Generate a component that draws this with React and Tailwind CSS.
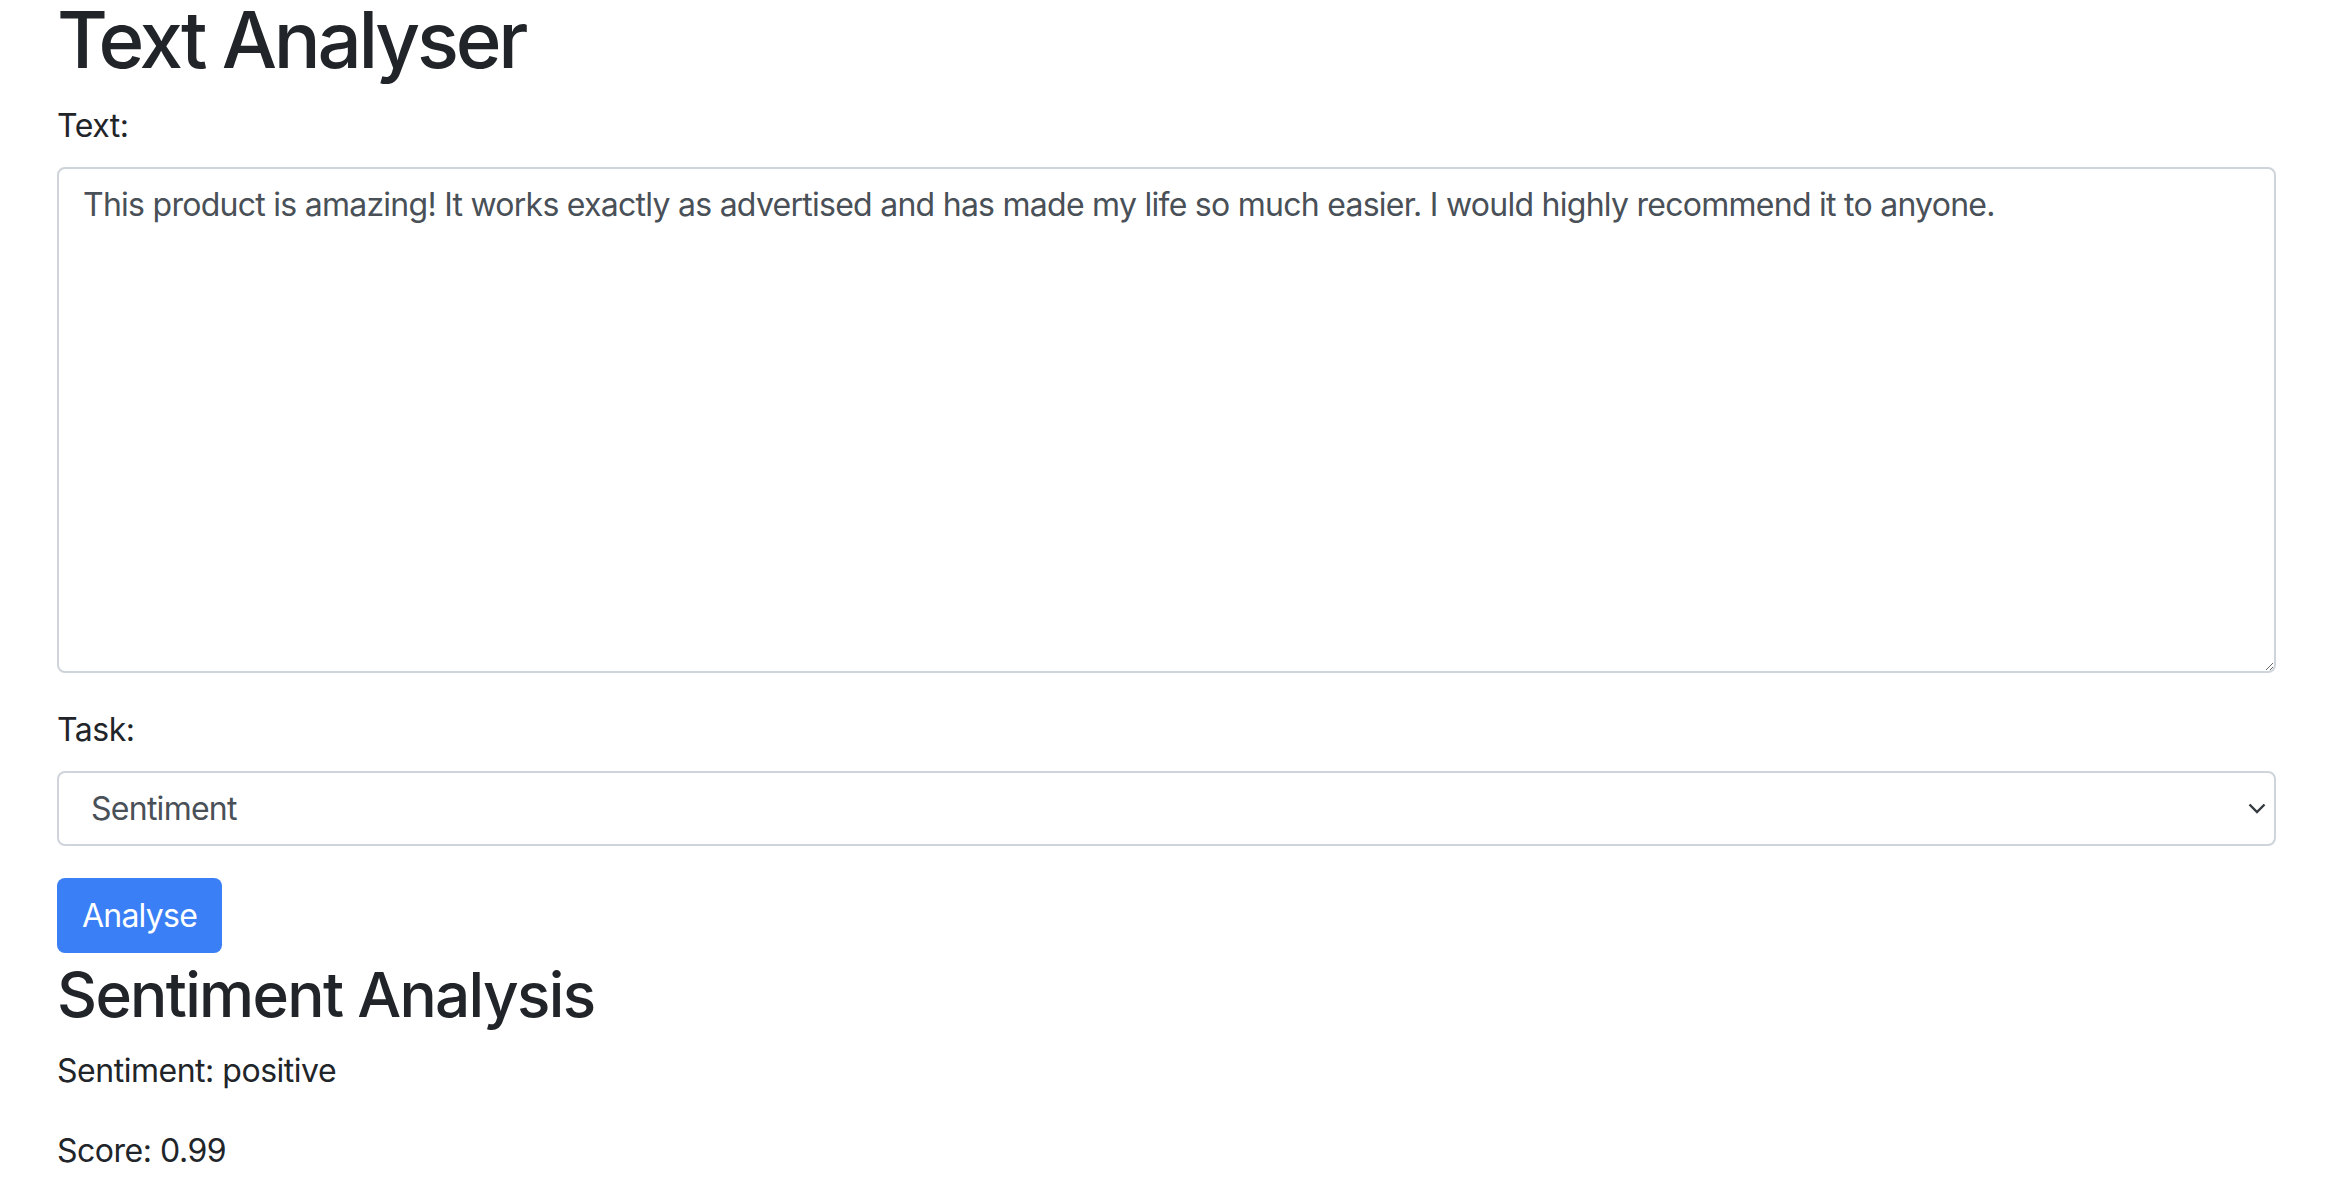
import { useState } from 'react';

const tasks = ['Sentiment', 'Summary', 'Keywords'];

export default function App() {
  const [text, setText] = useState(
    'This product is amazing! It works exactly as advertised and has made my life so much easier. I would highly recommend it to anyone.'
  );
  const [task, setTask] = useState('Sentiment');

  return (
    <div className="min-h-screen bg-white pl-[57px] pr-[64px] text-[#212529] tracking-[-0.03em] font-['Inter','Liberation_Sans',sans-serif]">
      <h1 className="text-[78px] leading-[80px] font-medium tracking-[-0.042em] mb-[22px]">Text Analyser</h1>

      <form onSubmit={e => e.preventDefault()}>
        <div className="mb-[33px]">
          <label className="block text-[32px] leading-[48px] mb-[17px]">Text:</label>
          <textarea
            value={text}
            onChange={e => setText(e.target.value)}
            className="block w-full h-[506px] border-2 border-[#ced4da] rounded-[8px] px-[24px] py-[12px] text-[32px] leading-[48px] tracking-[-0.023em] text-[#495057] outline-none"
          />
        </div>

        <div className="mb-[32px]">
          <label className="block text-[32px] leading-[48px] mb-[17px]">Task:</label>
          <div className="relative">
            <select
              value={task}
              onChange={e => setTask(e.target.value)}
              className="block w-full h-[75px] appearance-none border-2 border-[#ced4da] rounded-[8px] pl-[32px] pr-[60px] text-[32px] leading-[48px] tracking-[-0.023em] text-[#495057] bg-white outline-none"
            >
              {tasks.map(t => <option key={t}>{t}</option>)}
            </select>
            <svg className="absolute right-[10px] top-[32px] w-[18px] h-[11px] pointer-events-none" viewBox="0 0 18 11" fill="none">
              <path d="M1.5 1.5 L9 9 L16.5 1.5" stroke="#343a40" strokeWidth="2.4" />
            </svg>
          </div>
        </div>

        <button type="submit" className="block w-[165px] h-[75px] rounded-[8px] bg-[#3a7ff6] text-white text-[32px] leading-[48px] tracking-[-0.023em]">
          Analyse
        </button>
      </form>

      <h2 className="text-[62px] leading-[83px] font-medium tracking-[-0.027em] mb-[11px]">Sentiment Analysis</h2>
      <p className="text-[32px] leading-[48px] mb-[32px]">Sentiment: positive</p>
      <p className="text-[32px] leading-[48px] mb-[32px]">Score: 0.99</p>
    </div>
  );
}
